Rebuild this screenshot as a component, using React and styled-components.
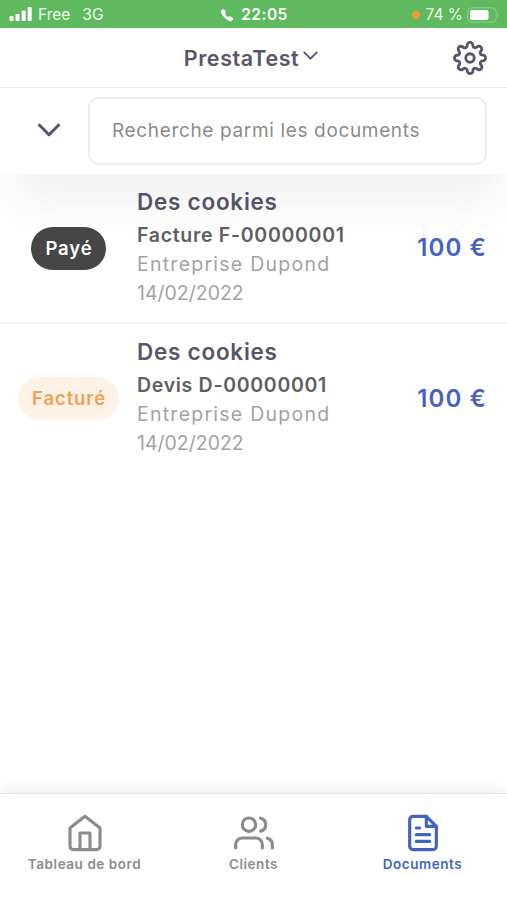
import React from 'react'
import styled, { createGlobalStyle } from 'styled-components'
import {
  FiChevronDown,
  FiFileText,
  FiHome,
  FiSettings,
  FiUsers,
} from 'react-icons/fi'
import { IoCall } from 'react-icons/io5'

const GlobalStyle = createGlobalStyle`
  * {
    box-sizing: border-box;
  }

  body {
    margin: 0;
    background-color: #fff;
    font-family: Inter, 'Open Sans', sans-serif;
  }
`

const Screen = styled.div`
  display: flex;
  flex-direction: column;
  height: 900px;
  overflow: hidden;
  color: #5a556b;
  white-space: nowrap;
`

const StatusBar = styled.div`
  display: grid;
  grid-template-columns: 1fr auto 1fr;
  flex: none;
  height: 28px;
  padding: 2px 8px 0 9px;
  background-color: #5fb95f;
  color: #eefaee;
  font-size: 15.5px;
  line-height: 26px;
`

const StatusGroup = styled.div`
  display: flex;
  align-items: center;
  justify-content: ${(props) => props.$align || 'flex-start'};

  svg {
    flex: none;
  }
`

const Signal = styled.svg`
  margin-bottom: 2px;
`

const Carrier = styled.span`
  margin-left: 5px;
`

const Network = styled.span`
  margin-left: 12px;
`

const Clock = styled.span`
  margin-left: 7px;
  color: #fff;
  font-weight: 600;
  letter-spacing: 0.5px;
`

const RecordingDot = styled.span`
  width: 8px;
  height: 8px;
  margin-right: 6px;
  border-radius: 50%;
  background-color: #f29a38;
`

const Battery = styled.svg`
  margin: 0 0 1px 4px;
`

const Header = styled.header`
  display: grid;
  grid-template-columns: 60px 1fr 60px;
  align-items: center;
  flex: none;
  height: 60px;
  padding: 0 7px;
  border-bottom: 1px solid #e9e9ee;
`

const Company = styled.div`
  display: flex;
  grid-column: 2;
  align-items: center;
  justify-content: center;
  font-size: 21.5px;
  font-weight: 600;
  line-height: 28px;
  letter-spacing: 0.6px;

  svg {
    margin: -4px 0 0 -1px;
  }
`

const SettingsButton = styled.div`
  display: flex;
  justify-content: center;
`

const SearchBar = styled.div`
  position: relative;
  display: flex;
  align-items: center;
  flex: none;
  height: 86px;
  padding: 0 20px 1px 30px;
  background-color: #fff;
  box-shadow: 4px 38px 40px -10px rgba(0, 0, 0, 0.06);

  > svg {
    margin-bottom: 1px;
  }
`

const SearchField = styled.div`
  flex: 1;
  height: 68px;
  margin-left: 20px;
  padding-left: 22px;
  border: 2px solid #eceef1;
  border-radius: 11px;
  color: #8b8b8b;
  font-size: 19px;
  line-height: 64px;
  letter-spacing: 0.65px;
`

const List = styled.div`
  flex: 1;
`

const Row = styled.div`
  display: grid;
  grid-template-columns: 137px 1fr auto;
  align-items: center;
  height: 150px;
  padding-right: 22px;
  border-bottom: ${(props) => (props.$last ? 'none' : '2px solid #f3f3f4')};
`

const BadgeCell = styled.div`
  display: flex;
  justify-content: center;
  padding-bottom: ${(props) => (props.$last ? '2px' : '0')};
`

const Badge = styled.span`
  padding: 0 13.5px 0 14.5px;
  border-radius: 22px;
  background-color: ${(props) => (props.$paid ? '#464646' : '#fef2e6')};
  color: ${(props) => (props.$paid ? '#fff' : '#f0a254')};
  font-size: 18.5px;
  font-weight: 600;
  line-height: 43px;
  letter-spacing: 0.9px;
`

const Details = styled.div`
  align-self: start;
  padding-top: 11px;
  color: #a3a3a3;
  font-size: 19px;
  line-height: 29px;
`

const Title = styled.div`
  margin-bottom: 3px;
  color: #5a556b;
  font-size: 22.5px;
  font-weight: 600;
  line-height: 33px;
  letter-spacing: 0.75px;
`

const Reference = styled.div`
  color: #606060;
  font-size: 19.5px;
  font-weight: 600;
  letter-spacing: 0.7px;
`

const Client = styled.div`
  font-size: 19.5px;
  letter-spacing: 1.25px;
`

const IssueDate = styled.div`
  font-size: 19.5px;
`

const Amount = styled.div`
  margin-right: -2px;
  padding-bottom: 2px;
  color: #4463c0;
  font-size: 24px;
  font-weight: 600;
  letter-spacing: 1.1px;
`

const TabBar = styled.nav`
  display: grid;
  grid-template-columns: repeat(3, 1fr);
  flex: none;
  height: 107px;
  padding-top: 19px;
  border-top: 1px solid #e2e2e2;
  background-color: #fff;
  box-shadow: 0 0 14px rgba(0, 0, 0, 0.1);
`

const Tab = styled.div`
  display: flex;
  flex-direction: column;
  align-items: center;
  color: ${(props) => (props.$active ? '#4463c0' : '#8c8c8c')};
  font-size: 13.5px;
  font-weight: 600;
  line-height: 22px;
  letter-spacing: 0.55px;
`

const documents = [
  { status: 'Payé', paid: true, reference: 'Facture F-00000001' },
  { status: 'Facturé', paid: false, reference: 'Devis D-00000001' },
]

const tabs = [
  { label: 'Tableau de bord', icon: FiHome },
  { label: 'Clients', icon: FiUsers },
  { label: 'Documents', icon: FiFileText, active: true },
]

const SignalIcon = () => (
  <Signal width="24" height="15" viewBox="0 0 24 15" fill="#fff">
    <rect x="0.5" y="9" width="4" height="5" rx="1" />
    <rect x="6.5" y="7" width="4" height="7" rx="1" />
    <rect x="12.7" y="3.5" width="4" height="10.5" rx="1" />
    <rect x="18.7" y="0" width="4" height="14" rx="1" />
  </Signal>
)

const BatteryIcon = () => (
  <Battery width="32" height="16" viewBox="0 0 32 16">
    <rect
      x="0.8"
      y="0.8"
      width="28.4"
      height="14.4"
      rx="4"
      fill="none"
      stroke="#93cf93"
    />
    <rect x="3" y="3" width="18.5" height="10" rx="2" fill="#fff" />
    <path d="M30.5 5.5c1.6 1 1.6 4 0 5z" fill="#93cf93" />
  </Battery>
)

const App = () => (
  <>
    <GlobalStyle />
    <Screen>
      <StatusBar>
        <StatusGroup>
          <SignalIcon />
          <Carrier>Free</Carrier>
          <Network>3G</Network>
        </StatusGroup>
        <StatusGroup>
          <IoCall size={14} color="#fff" />
          <Clock>22:05</Clock>
        </StatusGroup>
        <StatusGroup $align="flex-end">
          <RecordingDot />
          <span>74 %</span>
          <BatteryIcon />
        </StatusGroup>
      </StatusBar>
      <Header>
        <Company>
          PrestaTest
          <FiChevronDown size={25} strokeWidth={1.8} />
        </Company>
        <SettingsButton>
          <FiSettings size={34} />
        </SettingsButton>
      </Header>
      <SearchBar>
        <FiChevronDown size={38} />
        <SearchField>Recherche parmi les documents</SearchField>
      </SearchBar>
      <List>
        {documents.map((doc, i) => {
          const last = i === documents.length - 1

          return (
            <Row key={doc.reference} $last={last}>
              <BadgeCell $last={last}>
                <Badge $paid={doc.paid}>{doc.status}</Badge>
              </BadgeCell>
              <Details>
                <Title>Des cookies</Title>
                <Reference>{doc.reference}</Reference>
                <Client>Entreprise Dupond</Client>
                <IssueDate>14/02/2022</IssueDate>
              </Details>
              <Amount>100 €</Amount>
            </Row>
          )
        })}
      </List>
      <TabBar>
        {tabs.map(({ label, icon: Icon, active }) => (
          <Tab key={label} $active={active}>
            <Icon size={40} strokeWidth={1.9} />
            {label}
          </Tab>
        ))}
      </TabBar>
    </Screen>
  </>
)

export default App
